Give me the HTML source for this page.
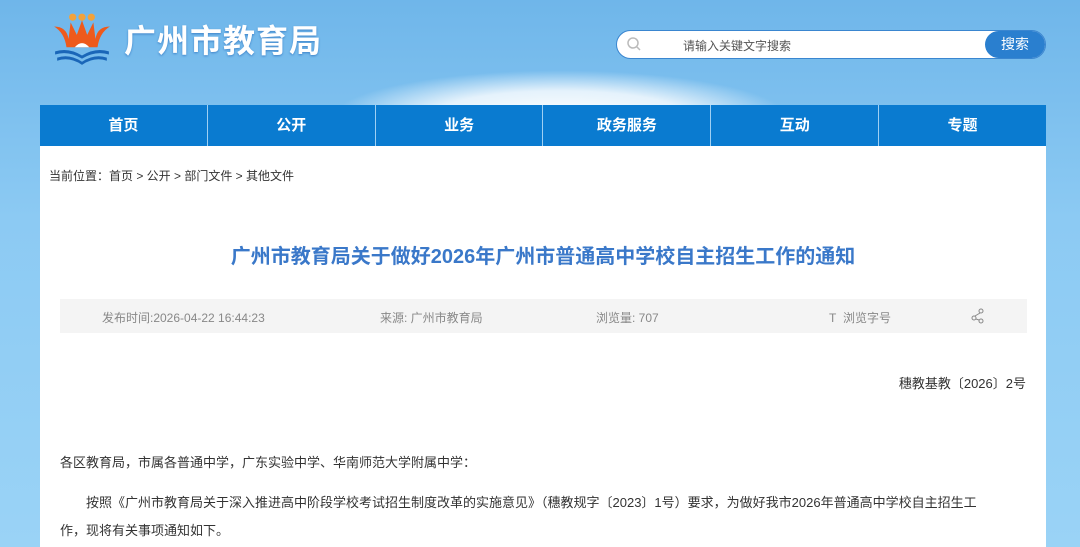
<!DOCTYPE html>
<html><head><meta charset="utf-8"><style>
*{margin:0;padding:0;box-sizing:border-box}
body{width:1080px;height:547px;overflow:hidden;font-family:"Liberation Sans","Noto Sans CJK SC",sans-serif;background:linear-gradient(180deg,#6fb6ea 0%,#8ccaf3 40%,#9ad3f6 100%);position:relative}
.cloud{position:absolute;left:330px;top:70px;width:460px;height:60px;background:radial-gradient(ellipse at 50% 80%,#fff 0%,rgba(255,255,255,.8) 40%,rgba(255,255,255,0) 70%)}
.logo{position:absolute;left:52px;top:12px}
.sitename{position:absolute;left:124px;top:16px;font-size:32px;color:#fff;font-weight:bold;letter-spacing:1px;text-shadow:0 1px 2px #3d82c8}
.search{position:absolute;left:616px;top:30px;width:430px;height:29px;border:1px solid #3a86d0;border-radius:15px;background:#fff}
.search .ph{position:absolute;left:66px;top:6px;font-size:12px;color:#555}
.search .btn{position:absolute;right:0;top:0;width:60px;height:27px;border-radius:14px;background:#2a7fcf;color:#fff;font-size:14px;text-align:center;line-height:27px}
.nav{position:absolute;left:40px;top:105px;width:1006px;height:41px;background:#0a7bd0;display:flex}
.nav div{flex:1;color:#fff;font-weight:bold;font-size:15px;text-align:center;line-height:42px;border-right:1px solid #9fd0f3}
.nav div:last-child{border-right:none}
.main{position:absolute;left:40px;top:146px;width:1006px;height:401px;background:#fff}
.crumb{position:absolute;left:9px;top:21px;font-size:12px;color:#333}
.title{position:absolute;left:0;width:1006px;top:94px;text-align:center;font-size:20px;font-weight:bold;color:#3a78c9}
.meta{position:absolute;left:20px;top:153px;width:967px;height:34px;background:#f4f4f4;font-size:12px;color:#888}
.meta span{position:absolute;top:10px}
.doc{position:absolute;right:20px;top:227px;font-size:13px;color:#333}
.p{position:absolute;left:20px;font-size:13px;color:#333;line-height:28px}
</style></head><body>
<div class="cloud"></div>
<svg class="logo" width="60" height="56" viewBox="0 0 58 54">
<circle cx="20" cy="5" r="3.5" fill="#f3a23b"/><circle cx="29" cy="5" r="3.5" fill="#f3a23b"/><circle cx="38" cy="5" r="3.5" fill="#f3a23b"/>
<path d="M2 14 Q14 14 16 26 L18 10 L24 22 L29 8 L34 22 L40 10 L42 26 Q44 14 56 14 Q46 20 44 34 L14 34 Q12 20 2 14Z" fill="#ee5a1c"/>
<path d="M22 34 Q29 26 36 34Z" fill="#fff"/>
<path d="M3 38 Q16 34 29 42 Q42 34 55 38 L55 41 Q42 37 29 45 Q16 37 3 41Z" fill="#1a66b8"/>
<path d="M5 44 Q17 40 29 48 Q41 40 53 44 L53 47 Q41 43 29 51 Q17 43 5 47Z" fill="#1a66b8"/>
</svg>
<div class="sitename">广州市教育局</div>
<div class="search"><svg style="position:absolute;left:10px;top:6px" width="14" height="14"><circle cx="6" cy="6" r="5" fill="none" stroke="#bbb" stroke-width="1.5"/><path d="M10 10 L13 13" stroke="#bbb" stroke-width="1.5"/></svg><span class="ph">请输入关键文字搜索</span><div class="btn">搜索</div></div>
<div class="nav"><div>首页</div><div>公开</div><div>业务</div><div>政务服务</div><div>互动</div><div>专题</div></div>
<div class="main">
<div class="crumb">当前位置：首页 &gt; 公开 &gt; 部门文件 &gt; 其他文件</div>
<div class="title">广州市教育局关于做好2026年广州市普通高中学校自主招生工作的通知</div>
<div class="meta"><span style="left:42px">发布时间:2026-04-22 16:44:23</span><span style="left:320px">来源: 广州市教育局</span><span style="left:536px">浏览量: 707</span><span style="left:769px">T&nbsp;&nbsp;浏览字号</span><svg style="position:absolute;left:911px;top:9px" width="14" height="16"><circle cx="10" cy="3" r="2" fill="none" stroke="#888"/><circle cx="3" cy="10" r="2" fill="none" stroke="#888"/><circle cx="10" cy="13" r="2" fill="none" stroke="#888"/><path d="M9 5 L4 8 M5 11 L8 12" stroke="#888"/></svg></div>
<div class="doc">穗教基教〔2026〕2号</div>
<div class="p" style="top:303px">各区教育局，市属各普通中学，广东实验中学、华南师范大学附属中学：</div>
<div class="p" style="top:343px;width:1000px;text-indent:26px;white-space:nowrap">按照《广州市教育局关于深入推进高中阶段学校考试招生制度改革的实施意见》（穗教规字〔2023〕1号）要求，为做好我市2026年普通高中学校自主招生工<br>作，现将有关事项通知如下。</div>
</div>
</body></html>
